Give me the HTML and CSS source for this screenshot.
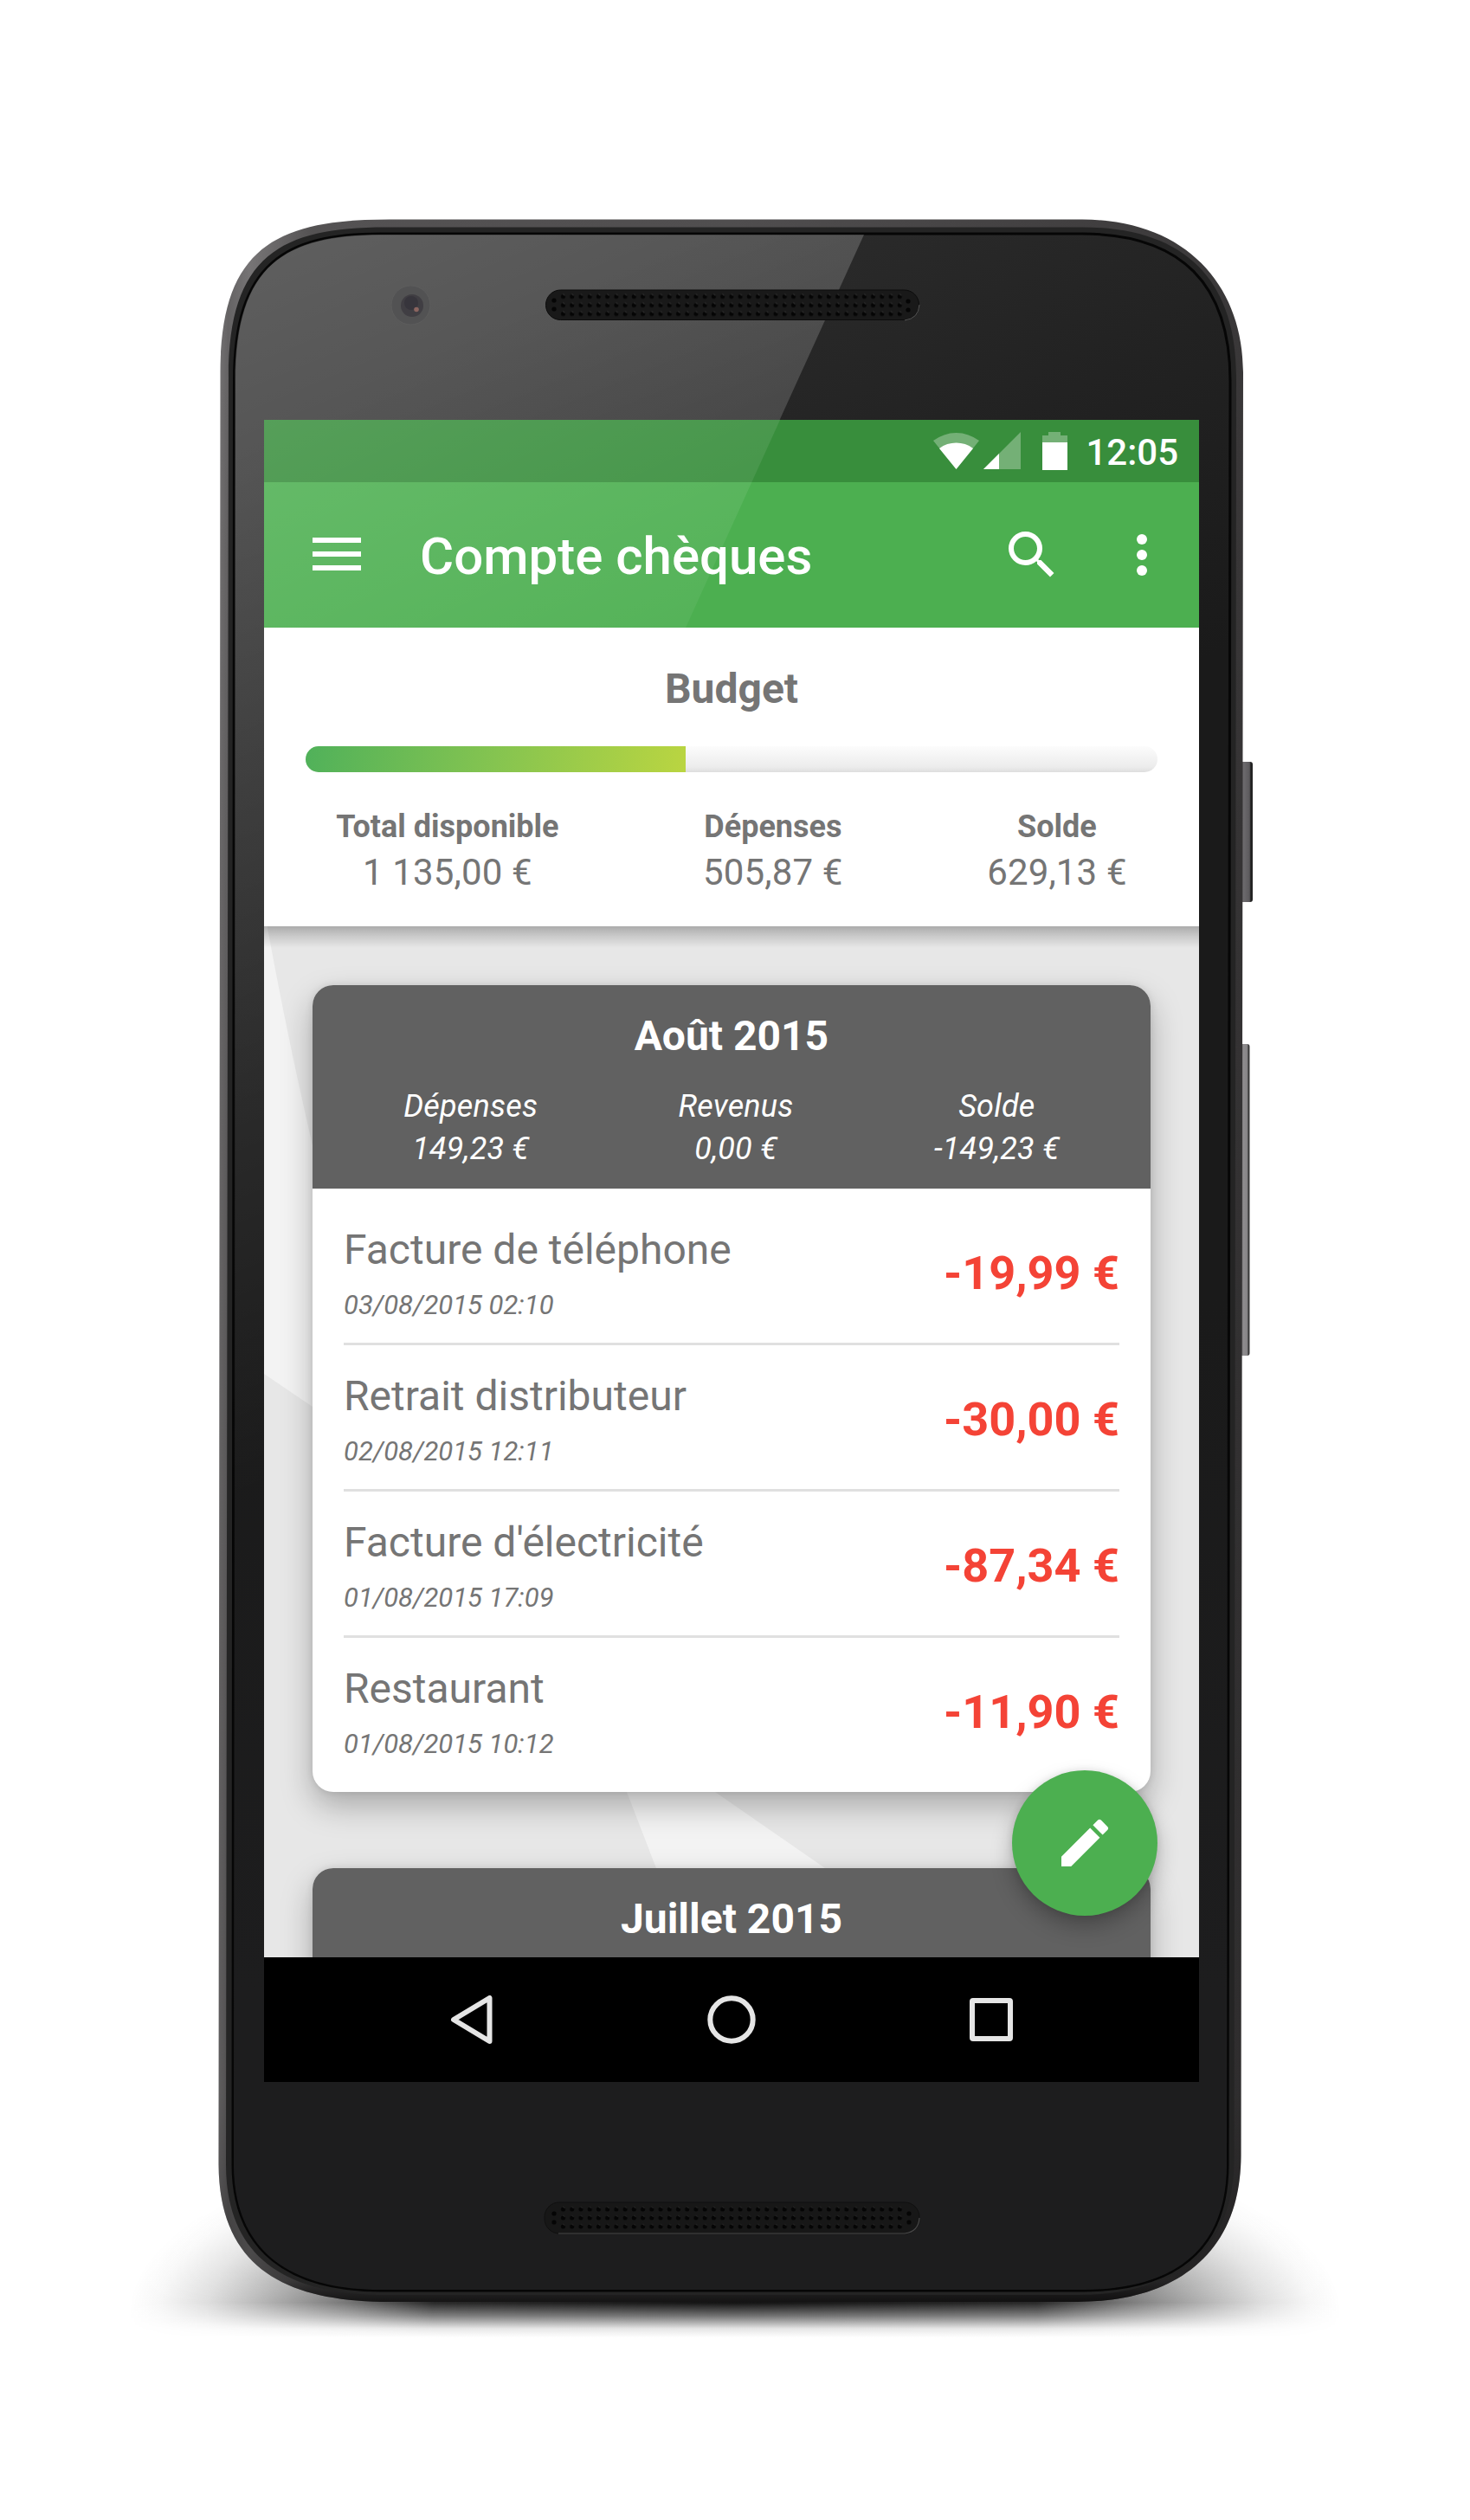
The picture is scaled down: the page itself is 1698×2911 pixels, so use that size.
FILE: index.html
```html
<!DOCTYPE html>
<html lang="fr">
<head>
<meta charset="utf-8">
<title>Compte chèques</title>
<link rel="stylesheet" href="styles.css">
</head>
<body>
<div class="stage">
  <svg class="device" viewBox="0 0 1698 2911" aria-hidden="true">
    <defs>
      <linearGradient id="rim" x1="254" y1="253" x2="1436" y2="253" gradientUnits="userSpaceOnUse">
        <stop offset="0" stop-color="#747273"/><stop offset=".008" stop-color="#666465"/><stop offset=".03" stop-color="#777576"/><stop offset=".09" stop-color="#545253"/><stop offset=".5" stop-color="#504e4f"/><stop offset="1" stop-color="#3a3839"/>
      </linearGradient>
      <linearGradient id="rimShade" x1="0" y1="253" x2="0" y2="2659" gradientUnits="userSpaceOnUse">
        <stop offset="0" stop-color="#000" stop-opacity="0"/><stop offset=".35" stop-color="#000" stop-opacity=".1"/><stop offset=".9" stop-color="#000" stop-opacity=".2"/><stop offset=".99" stop-color="#000" stop-opacity=".4"/><stop offset="1" stop-color="#000" stop-opacity=".75"/>
      </linearGradient>
      <linearGradient id="glass" x1="800" y1="271" x2="1100" y2="900" gradientUnits="userSpaceOnUse">
        <stop offset="0" stop-color="#2c2c2c"/><stop offset=".5" stop-color="#222"/><stop offset="1" stop-color="#1a1a1a"/>
      </linearGradient>
      <linearGradient id="chin" x1="0" y1="1500" x2="0" y2="2300" gradientUnits="userSpaceOnUse">
        <stop offset="0" stop-color="#1d1d1e" stop-opacity="0"/><stop offset="1" stop-color="#1d1d1e"/>
      </linearGradient>
      <linearGradient id="glare" x1="330" y1="271" x2="840" y2="1500" gradientUnits="userSpaceOnUse">
        <stop offset="0" stop-color="#fff" stop-opacity=".24"/><stop offset=".4" stop-color="#fff" stop-opacity=".135"/><stop offset="1" stop-color="#fff" stop-opacity="0"/>
      </linearGradient>
      <linearGradient id="fade" x1="0" y1="2450" x2="0" y2="2700" gradientUnits="userSpaceOnUse">
        <stop offset="0" stop-color="#000"/><stop offset=".2" stop-color="#333"/><stop offset=".84" stop-color="#fff"/><stop offset=".9" stop-color="#999"/><stop offset=".96" stop-color="#1c1c1c"/><stop offset="1" stop-color="#000"/>
      </linearGradient>
      <mask id="ground" maskUnits="userSpaceOnUse" x="100" y="2440" width="1500" height="270"><rect x="100" y="2440" width="1500" height="270" fill="url(#fade)"/></mask>
      <radialGradient id="cast" cx="0" cy="0" r="1" gradientTransform="translate(849 2672) scale(700 240)" gradientUnits="userSpaceOnUse">
        <stop offset="0" stop-color="#111"/><stop offset=".5" stop-color="#111" stop-opacity=".9"/><stop offset=".64" stop-color="#111" stop-opacity=".58"/><stop offset=".76" stop-color="#111" stop-opacity=".35"/><stop offset=".87" stop-color="#111" stop-opacity=".14"/><stop offset=".95" stop-color="#111" stop-opacity=".035"/><stop offset="1" stop-color="#111" stop-opacity="0"/>
      </radialGradient>
      <pattern id="holes" x="645.4" y="337.5" width="10.23" height="10" patternUnits="userSpaceOnUse">
        <circle cx="5.1" cy="5" r="2.6" fill="#050505"/><path d="M5 2.3l2 1.4" stroke="#444" stroke-width=".9"/>
      </pattern>
      <pattern id="holesLow" x="645.4" y="2547" width="10.23" height="10" patternUnits="userSpaceOnUse">
        <circle cx="5.1" cy="5" r="2.6" fill="#050505"/><path d="M5 2.3l2 1.4" stroke="#333" stroke-width=".8"/>
      </pattern>
      <clipPath id="glassClip"><path d="M440 271C330 271 271.500 305 271.500 440L270 2500C270 2600 335 2645 440 2645H1250C1355 2645 1417 2600 1417 2500L1420 440C1420 330 1365 271 1250 271Z"/></clipPath>
      <linearGradient id="key" x1="0" y1="0" x2="1" y2="0"><stop offset="0" stop-color="#555"/><stop offset=".3" stop-color="#6c6a6d"/><stop offset=".75" stop-color="#5c5a5d"/><stop offset=".85" stop-color="#222"/><stop offset="1" stop-color="#222"/></linearGradient>
      <linearGradient id="keyLight" x1="0" y1="0" x2="1" y2="0"><stop offset="0" stop-color="#666"/><stop offset=".4" stop-color="#8e8c8e"/><stop offset=".78" stop-color="#858385"/><stop offset=".86" stop-color="#333"/><stop offset="1" stop-color="#444"/></linearGradient>
    </defs>
    <rect x="100" y="2440" width="1500" height="270" fill="url(#cast)" mask="url(#ground)"/>
    <rect x="1432" y="880" width="15" height="162" rx="3" fill="url(#key)"/>
    <rect x="1432" y="1206" width="11.500" height="360" rx="3" fill="url(#keyLight)"/>
    <path d="M450 253.500C320 253.500 254.500 285 254.500 430L252.500 2500C253 2620 330 2659 450 2659H1245C1350 2659 1433 2610 1433.500 2490L1436 430C1436 330 1370 253.500 1250 253.500Z" fill="url(#rim)"/>
    <path d="M450 253.500C320 253.500 254.500 285 254.500 430L252.500 2500C253 2620 330 2659 450 2659H1245C1350 2659 1433 2610 1433.500 2490L1436 430C1436 330 1370 253.500 1250 253.500Z" fill="url(#rimShade)"/>
    <path d="M445 262.500C325 262.500 264 295 264 435L261 2500C261 2610 333 2651 445 2651H1245C1350 2651 1425 2605 1425.500 2495L1428 435C1428 325 1370 262.500 1250 262.500Z" fill="#242424"/>
    <path d="M440 270C329 270 270.500 304 270.500 440L269 2500C269 2601 335 2646 440 2646H1250C1355 2646 1418 2601 1418 2500L1421 440C1421 329 1365 270 1250 270Z" fill="url(#glass)" stroke="#060606" stroke-width="3"/>
    <g clip-path="url(#glassClip)">
      <rect x="265" y="1500" width="1160" height="1150" fill="url(#chin)"/>
      <path d="M265 271H998L305 1794H265Z" fill="url(#glare)"/>
    </g>
    <circle cx="474.500" cy="352.500" r="22.500" fill="#525253" stroke="#5d5d5d"/>
    <circle cx="476" cy="353" r="13" fill="#403e43"/>
    <circle cx="475" cy="350" r="8" fill="#37353c"/><circle cx="481" cy="357.500" r="2.800" fill="#8b6560"/>
    <rect x="630.500" y="335" width="431" height="34.500" rx="17" fill="#191919" stroke="#0c0c0c"/>
    <rect x="645.400" y="337.500" width="398.970" height="30" fill="url(#holes)"/>
    <g fill="#050505"><circle cx="640" cy="347" r="2.600"/><circle cx="640" cy="357" r="2.600"/><circle cx="1049" cy="348" r="2.600"/><circle cx="1049" cy="358" r="2.600"/></g>
    <path d="M1045 370Q1061 368 1062 352" fill="none" stroke="#555" stroke-width="1"/>
    <rect x="629" y="2544" width="433" height="36" rx="17" fill="#171717" stroke="#101010"/>
    <rect x="645.400" y="2547" width="398.970" height="30" fill="url(#holesLow)"/>
    <g fill="#050505"><circle cx="640" cy="2557" r="2.600"/><circle cx="640" cy="2567" r="2.600"/><circle cx="1050" cy="2557" r="2.600"/><circle cx="1050" cy="2567" r="2.600"/></g>
    <path d="M645 2580H1045Q1061 2578 1062 2562" fill="none" stroke="#4a4a4a" stroke-width="1.200"/>
  </svg>

  <div class="screen">
    <header class="status">
      <svg class="status-icons" viewBox="0 0 156 46" aria-hidden="true">
        <g fill="#fff">
          <path opacity=".3" d="M0 11A44 44 0 0 1 53 11L26.500 44Z"/>
          <path d="M7 20A33 33 0 0 1 46 20L26.500 44Z"/>
          <path opacity=".3" d="M58 44L101 1V44Z"/>
          <path d="M58 44L76 26V44Z"/>
          <path opacity=".3" d="M133 1H147V5H155V13H126V5H133Z"/>
          <path d="M126 13H155V45H126Z"/>
        </g>
      </svg>
      <time class="clock">12:05</time>
    </header>
    <div class="toolbar">
      <svg class="menu" viewBox="0 0 56 38" fill="#fff"><path d="M0 0H56V6H0ZM0 16H56V22H0ZM0 32H56V38H0Z"/></svg>
      <h1 class="title">Compte chèques</h1>
      <svg class="search" viewBox="0 0 24 24" fill="#fff"><path d="M15.500 14h-.79l-.28-.27A6.471 6.471 0 0 0 16 9.500 6.500 6.500 0 1 0 9.500 16c1.610 0 3.090-.59 4.230-1.570l.27.28v.79l5 4.990L20.490 19l-4.990-5zm-6 0C7.010 14 5 11.990 5 9.500S7.010 5 9.500 5 14 7.010 14 9.500 11.990 14 9.500 14z"/></svg>
      <svg class="more" viewBox="0 0 12 48" fill="#fff"><circle cx="6" cy="6" r="6"/><circle cx="6" cy="24" r="6"/><circle cx="6" cy="42" r="6"/></svg>
    </div>
    <section class="budget">
      <h2 class="budget-title">Budget</h2>
      <div class="track"><div class="fill" style="width:44.6%"></div></div>
      <div class="totals">
        <div class="total"><b>Total disponible</b><span>1 135,00 €</span></div>
        <div class="total"><b>Dépenses</b><span>505,87 €</span></div>
        <div class="total"><b>Solde</b><span>629,13 €</span></div>
      </div>
    </section>
    <main class="feed">
      <svg class="backdrop" viewBox="0 0 1080 1191" aria-hidden="true"><path d="M0-20Q25 120 56 253Q200 760 521 1000L648 1088L730 1140H475L453 1088L419 1000Q250 700 56 555L0 517Z" fill="#f3f3f3"/></svg>
      <article class="card">
        <div class="month">
          <h3>Août 2015</h3>
          <div class="sums">
            <div><span>Dépenses</span><span>149,23 €</span></div>
            <div><span>Revenus</span><span>0,00 €</span></div>
            <div><span>Solde</span><span>-149,23 €</span></div>
          </div>
        </div>
        <ul class="rows">
          <li><div><p>Facture de téléphone</p><time>03/08/2015 02:10</time></div><strong>-19,99 €</strong></li>
          <li><div><p>Retrait distributeur</p><time>02/08/2015 12:11</time></div><strong>-30,00 €</strong></li>
          <li><div><p>Facture d'électricité</p><time>01/08/2015 17:09</time></div><strong>-87,34 €</strong></li>
          <li><div><p>Restaurant</p><time>01/08/2015 10:12</time></div><strong>-11,90 €</strong></li>
        </ul>
      </article>
      <article class="card">
        <div class="month"><h3>Juillet 2015</h3></div>
      </article>
      <div class="fab"><svg viewBox="0 0 24 24" fill="#fff"><path d="M3 17.250V21h3.750L17.810 9.940l-3.750-3.750L3 17.250zM20.710 7.040a1 1 0 0 0 0-1.410l-2.340-2.340a1 1 0 0 0-1.410 0l-1.830 1.830 3.750 3.750 1.830-1.830z"/></svg></div>
    </main>
    <nav class="navbar">
      <svg viewBox="0 0 56 56"><path d="M48.500 3V53L7 28Z"/></svg>
      <svg viewBox="0 0 56 56"><circle cx="28" cy="28" r="24.700"/></svg>
      <svg viewBox="0 0 56 56"><rect x="6" y="6" width="44" height="44" rx="1"/></svg>
    </nav>
    <div class="sheen"></div>
  </div>
</div>
</body>
</html>
```
FILE: styles.css
```css
* { box-sizing: border-box; margin: 0; padding: 0; }
body { background: #fff; font-family: Roboto, "Liberation Sans", sans-serif; color: #757575; }
.stage { position: relative; width: 1698px; height: 2911px; padding: 485px 0 0 305px; overflow: hidden; }
.device { position: absolute; inset: 0; width: 1698px; height: 2911px; }
.screen { position: relative; display: flex; flex-direction: column; width: 1080px; height: 1920px; background: #e7e7e7; overflow: hidden; }

.status { display: flex; justify-content: flex-end; align-items: center; gap: 20px; flex: none; height: 72px; padding-right: 24px; background: #388e3c; color: #fff; }
.status-icons { width: 156px; height: 46px; }
.clock { font-size: 42px; font-weight: 500; line-height: 50px; padding-top: 3px; }

.toolbar { display: flex; align-items: center; flex: none; height: 168px; padding: 0 60px 0 56px; background: #4caf50; color: #fff; }
.menu { width: 56px; height: 38px; margin-top: -2px; }
.title { flex: 1; margin-left: 68px; font-size: 60px; font-weight: 500; line-height: 70px; padding-top: 4px; }
.search { width: 72px; height: 72px; }
.more { width: 12px; height: 48px; margin-left: 85px; }

.budget { position: relative; z-index: 1; flex: none; height: 345px; padding-top: 43px; background: #fff; }
.budget::after { content: ""; position: absolute; left: 0; right: 0; top: 100%; height: 25px; background: linear-gradient(rgba(0,0,0,.26), rgba(0,0,0,.13) 45%, rgba(0,0,0,0)); }
.budget-title { font-size: 48px; font-weight: 700; line-height: 56px; text-align: center; }
.track { height: 30px; margin: 38px 48px 0; border-radius: 15px; overflow: hidden; background: linear-gradient(#fcfcfc, #ececec 80%, #dedede); }
.fill { height: 30px; background: linear-gradient(100deg, #50b15a, #85c450 50%, #bad541); }
.totals { display: flex; justify-content: space-around; margin-top: 42px; }
.total { display: flex; flex-direction: column; align-items: center; }
.total b { font-size: 36px; line-height: 42px; }
.total span { font-size: 42px; line-height: 49px; margin-top: 7px; letter-spacing: .15px; }

.feed { position: relative; flex: 1; min-height: 0; padding: 68px 56px 0; overflow: hidden; }
.backdrop { position: absolute; left: 0; top: 0; width: 1080px; height: 1191px; }
.card { position: relative; margin-bottom: 88px; border-radius: 24px; background: #fff; box-shadow: 0 16px 36px rgba(0,0,0,.27), 0 0 8px rgba(0,0,0,.1); }
.month { height: 235px; padding: 31px 24px 0; border-radius: 24px 24px 0 0; background: #616161; color: #fff; }
.month h3 { font-size: 48px; line-height: 56px; text-align: center; }
.sums { display: flex; justify-content: space-around; margin-top: 32px; font-size: 36px; font-style: italic; line-height: 42px; letter-spacing: .2px; }
.sums div { display: flex; flex-direction: column; align-items: center; gap: 7px; }
.rows { list-style: none; padding: 12px 36px; }
.rows li { display: flex; justify-content: space-between; align-items: flex-start; height: 169px; border-bottom: 3px solid #e0e0e0; }
.rows li:last-child { height: 166px; border-bottom: 0; }
.rows p { margin-top: 31px; font-size: 48px; line-height: 56px; }
.rows time { display: block; margin-top: 18px; font-size: 31px; font-style: italic; line-height: 36px; }
.rows strong { margin-top: 54px; color: #f44336; font-size: 54px; line-height: 64px; }
.fab { position: absolute; right: 48px; top: 975px; display: grid; place-items: center; width: 168px; height: 168px; border-radius: 50%; background: #4caf50; box-shadow: 0 12px 24px rgba(0,0,0,.26), 0 0 8px rgba(0,0,0,.1); }
.fab svg { width: 72px; height: 72px; }

.navbar { display: flex; justify-content: space-between; align-items: center; flex: none; height: 144px; padding: 0 212px; background: #000; }
.navbar svg { width: 56px; height: 56px; fill: none; stroke: #e5e5e5; stroke-width: 6; stroke-linejoin: round; }
.sheen { position: absolute; left: 0; top: 0; width: 596px; height: 240px; background: linear-gradient(155deg, rgba(255,255,255,.15), rgba(255,255,255,.04)); clip-path: polygon(0 0, 100% 0, 487px 100%, 0 100%); }
```
